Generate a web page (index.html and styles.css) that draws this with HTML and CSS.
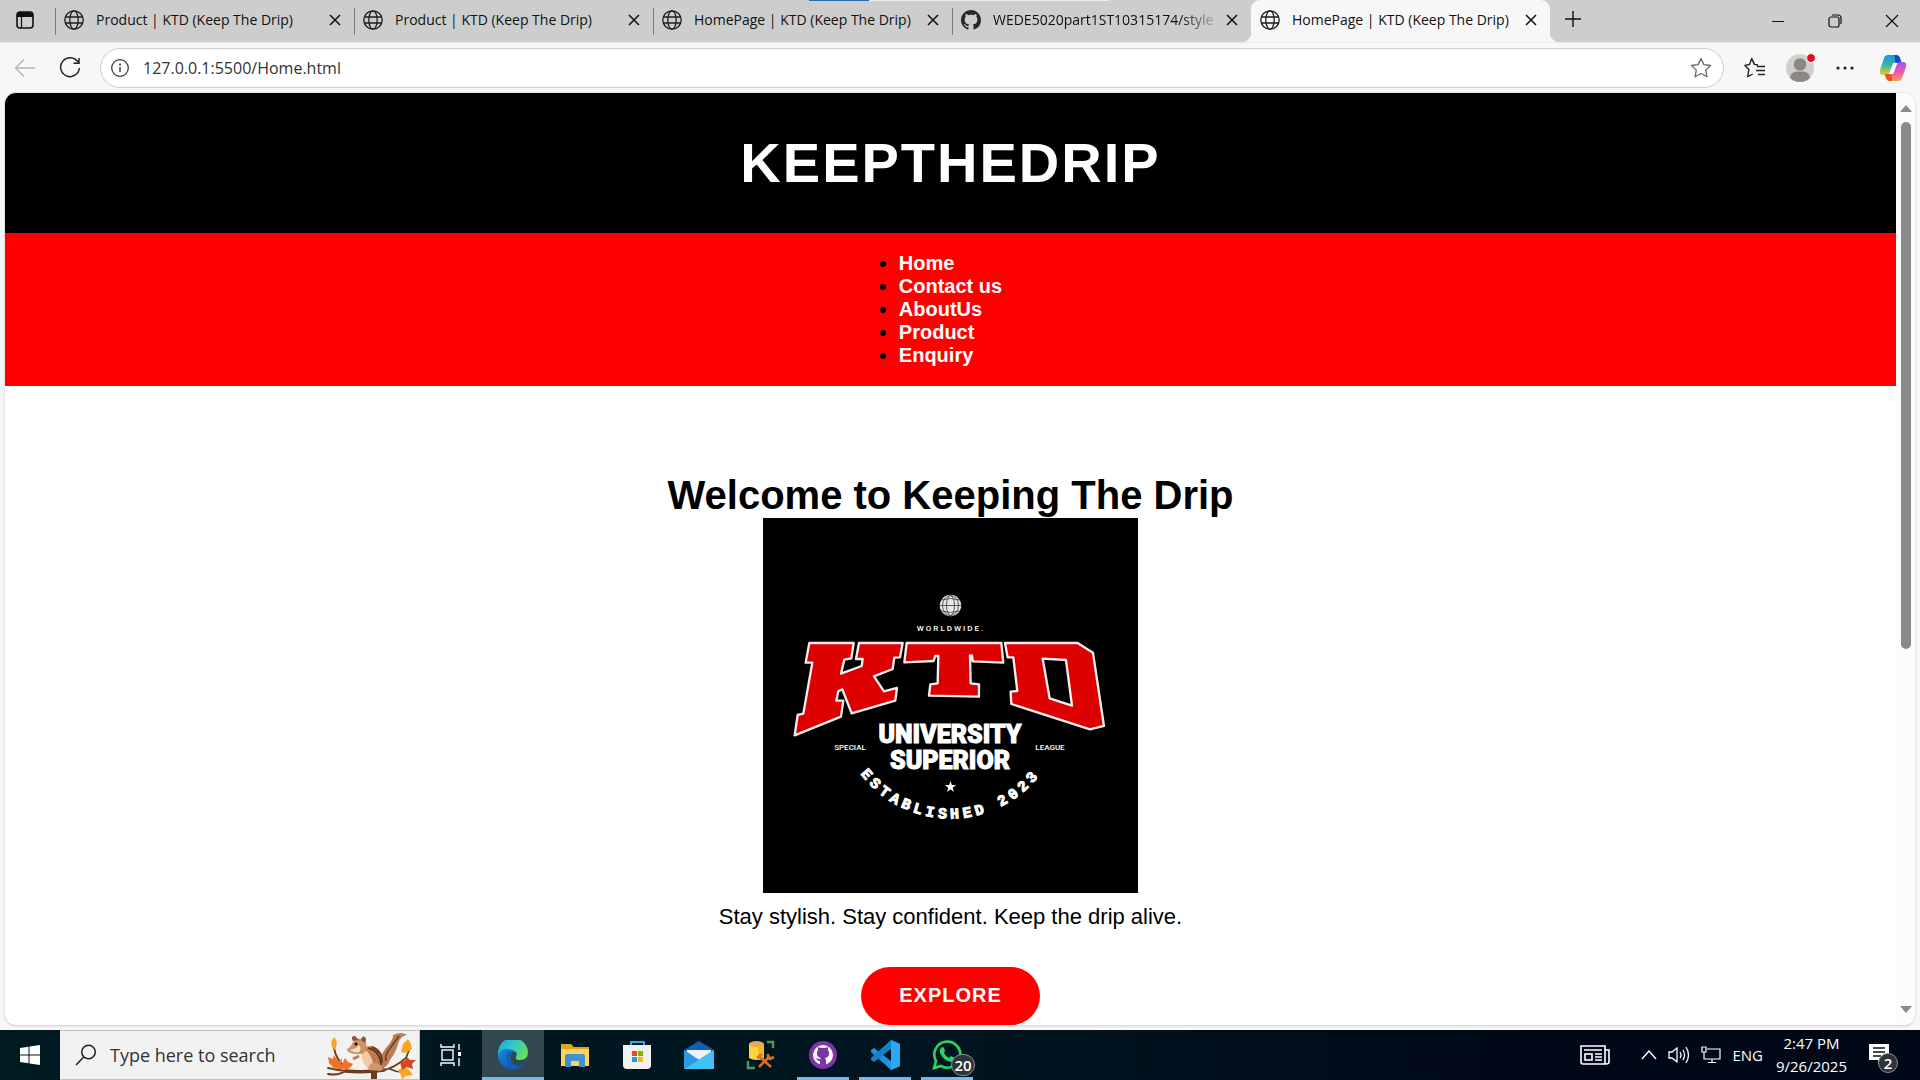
FILE: index.html
```html
<!DOCTYPE html>
<html lang="en">
<head>
<meta charset="utf-8">
<title>HomePage | KTD (Keep The Drip)</title>
<link rel="stylesheet" href="styles.css">
</head>
<body>
<svg class="defs" aria-hidden="true">
  <symbol id="globe" viewBox="0 0 20 20"><g fill="none" stroke="#1c1c1c" stroke-width="1.3"><circle cx="10" cy="10" r="9.2"/><ellipse cx="10" cy="10" rx="4.2" ry="9.2"/><path d="M1.5 7h17M1.5 13h17"/></g></symbol>
  <symbol id="cross" viewBox="0 0 12 12"><path d="M1 1l10 10M11 1L1 11" fill="none" stroke="#111" stroke-width="1.5"/></symbol>
  <symbol id="github" viewBox="0 0 16 16"><path d="M8 0C3.58 0 0 3.58 0 8c0 3.54 2.29 6.53 5.47 7.59.4.07.55-.17.55-.38 0-.19-.01-.82-.01-1.49-2.01.37-2.53-.49-2.69-.94-.09-.23-.48-.94-.82-1.13-.28-.15-.68-.52-.01-.53.63-.01 1.08.58 1.23.82.72 1.21 1.87.87 2.33.66.07-.52.28-.87.51-1.07-1.78-.2-3.64-.89-3.64-3.95 0-.87.31-1.59.82-2.15-.08-.2-.36-1.02.08-2.12 0 0 .67-.21 2.2.82.64-.18 1.32-.27 2-.27s1.36.09 2 .27c1.53-1.04 2.2-.82 2.2-.82.44 1.1.16 1.92.08 2.12.51.56.82 1.27.82 2.15 0 3.07-1.87 3.75-3.65 3.95.29.25.54.73.54 1.48 0 1.07-.01 1.93-.01 2.2 0 .21.15.46.55.38A8.01 8.01 0 0016 8c0-4.42-3.58-8-8-8z"/></symbol>
</svg>

<header class="strip">
  <button class="tab-actions" aria-label="Tab actions"><svg width="18" height="18" viewBox="0 0 18 18"><rect x="1" y="1" width="16" height="16" rx="3" fill="none" stroke="#111" stroke-width="1.6"/><path d="M1 6V4q0-3 3-3h10q3 0 3 3v2z" fill="#111"/><path d="M5.500 6v11" stroke="#111" stroke-width="1.2"/></svg></button>
  <div class="tab"><svg class="tab-icon"><use href="#globe"/></svg><span class="tab-title">Product | KTD (Keep The Drip)</span><button class="tab-close" aria-label="Close tab"><svg width="12" height="12"><use href="#cross"/></svg></button></div>
  <div class="tab"><svg class="tab-icon"><use href="#globe"/></svg><span class="tab-title">Product | KTD (Keep The Drip)</span><button class="tab-close" aria-label="Close tab"><svg width="12" height="12"><use href="#cross"/></svg></button></div>
  <div class="tab"><svg class="tab-icon"><use href="#globe"/></svg><span class="tab-title">HomePage | KTD (Keep The Drip)</span><button class="tab-close" aria-label="Close tab"><svg width="12" height="12"><use href="#cross"/></svg></button></div>
  <div class="tab"><svg class="tab-icon" fill="#24292f"><use href="#github"/></svg><span class="tab-title fade">WEDE5020part1ST10315174/style</span><button class="tab-close" aria-label="Close tab"><svg width="12" height="12"><use href="#cross"/></svg></button></div>
  <div class="tab active"><svg class="tab-icon"><use href="#globe"/></svg><span class="tab-title">HomePage | KTD (Keep The Drip)</span><button class="tab-close" aria-label="Close tab"><svg width="12" height="12"><use href="#cross"/></svg></button></div>
  <button class="new-tab" aria-label="New tab"><svg width="18" height="18" viewBox="0 0 18 18"><path d="M9 1v16M1 9h16" stroke="#111" stroke-width="1.4"/></svg></button>
  <div class="window-controls">
    <button aria-label="Minimize"><svg width="14" height="14" viewBox="0 0 14 14"><path d="M1 7.500h12" stroke="#111"/></svg></button>
    <button aria-label="Restore"><svg width="14" height="14" viewBox="0 0 14 14"><g fill="none" stroke="#111" stroke-width="1.2"><rect x="1" y="3" width="10" height="10" rx="2"/><path d="M4 1h6q3 0 3 3v6"/></g></svg></button>
    <button aria-label="Close"><svg width="14" height="14" viewBox="0 0 14 14"><path d="M1 1l12 12M13 1L1 13" stroke="#111" stroke-width="1.2"/></svg></button>
  </div>
  <div class="load-bar"></div>
</header>

<div class="toolbar">
  <button aria-label="Back"><svg width="22" height="20" viewBox="0 0 22 20"><path d="M21 10H1.500M10 1.500L1.500 10l8.500 8.500" fill="none" stroke="#b5b5b5" stroke-width="1.4"/></svg></button>
  <button aria-label="Refresh"><svg width="22" height="22" viewBox="0 0 22 22"><path d="M19 5.200A9.400 9.400 0 1 0 20.400 11M20 1v5.200h-5.500" fill="none" stroke="#222" stroke-width="1.500"/></svg></button>
  <div class="address">
    <svg width="18" height="18" viewBox="0 0 18 18"><circle cx="9" cy="9" r="8.300" fill="none" stroke="#333" stroke-width="1.200"/><path d="M9 8v5" stroke="#333" stroke-width="1.400"/><circle cx="9" cy="5.500" r="1" fill="#333"/></svg>
    <input type="text" aria-label="Address" value="127.0.0.1:5500/Home.html">
    <button aria-label="Add to favorites"><svg width="22" height="22" viewBox="0 0 22 22"><path d="M11 1.500l2.900 6.100 6.700.9-4.900 4.600 1.200 6.600-5.900-3.200-5.900 3.200 1.200-6.600L1.400 8.500l6.700-.9z" fill="none" stroke="#666" stroke-width="1.300" stroke-linejoin="round"/></svg></button>
  </div>
  <div class="tools">
    <button aria-label="Favorites"><svg width="22" height="22" viewBox="0 0 22 22"><path d="M14 8l-3.500-.6L7.700 1.600 5.500 7.500.9 8.400l4 4-1.200 7.200 5-2.600M13 9.500h8M12 13.500h9M14 17.500h7M7.700 1.600l2.600 5.900" fill="none" stroke="#222" stroke-width="1.400" stroke-linejoin="round"/></svg></button>
    <button aria-label="Profile"><svg width="30" height="30" viewBox="0 0 30 30"><circle cx="14" cy="15" r="14" fill="#d3d0cc"/><circle cx="14" cy="11.500" r="6.200" fill="#8b8783"/><path d="M4 25q1-6.500 7-6.500h6q6 0 7 6.500-4 4-10 4T4 25z" fill="#8b8783"/><circle cx="25" cy="5" r="4.400" fill="#e00b1c" stroke="#f7f7f7"/></svg></button>
    <button aria-label="Settings and more"><svg width="18" height="4" viewBox="0 0 18 4"><g fill="#222"><circle cx="2" cy="2" r="1.600"/><circle cx="9" cy="2" r="1.600"/><circle cx="16" cy="2" r="1.600"/></g></svg></button>
    <button aria-label="Copilot"><svg width="28" height="28" viewBox="0 0 28 28"><defs><linearGradient id="cpa" x1="0" y1="0" x2="0" y2="1"><stop offset="0" stop-color="#1697e6"/><stop offset=".5" stop-color="#38b59c"/><stop offset="1" stop-color="#e9d424"/></linearGradient><linearGradient id="cpb" x1="0" y1="0" x2="0" y2="1"><stop offset="0" stop-color="#a355f0"/><stop offset=".55" stop-color="#ef58a8"/><stop offset="1" stop-color="#ff9a4c"/></linearGradient></defs><path d="M9 1h8q3 0 4 3l1.500 5H17q-3 0-4 3l-2 6q-1 3-4 3H4q-4 0-3-5L5 4q1-3 4-3z" fill="url(#cpa)"/><path d="M15 1h2q3 0 4 3l1.500 5H18q-3-1-2-5z" fill="#1b46c8"/><path d="M19 27h-8q-3 0-4-3l-1-4h5q3 0 4-3l2-6q1-3 4-3h3q4 0 3 5l-4 11q-1 3-4 3z" fill="url(#cpb)"/><path d="M13 27h-2q-3 0-4-3l-1-4h5q3 1 2 7z" fill="#ee5128"/><path d="M14.500 9h4l-4.500 11h-4z" fill="#fff"/></svg></button>
  </div>
</div>

<div class="viewport">
  <main class="page">
    <div class="banner"><h1>KEEPTHEDRIP</h1></div>
    <nav class="menu"><ul>
      <li><a href="#home">Home</a></li>
      <li><a href="#contact">Contact us</a></li>
      <li><a href="#about">AboutUs</a></li>
      <li><a href="#product">Product</a></li>
      <li><a href="#enquiry">Enquiry</a></li>
    </ul></nav>
    <section class="hero">
      <h2>Welcome to Keeping The Drip</h2>
      <svg class="logo" viewBox="0 0 375 375" role="img" aria-label="KTD University Superior">
        <rect width="375" height="375"/>
        <circle cx="187.500" cy="87.500" r="10.700" fill="#e8e8e8"/>
        <g fill="none" stroke="#333" stroke-width=".8"><ellipse cx="187.500" cy="87.500" rx="4" ry="10"/><ellipse cx="187.500" cy="87.500" rx="8" ry="10"/><path d="M177 87.500h21M178 82q9.500-3 19 0M178 93q9.500 3 19 0"/></g>
        <g transform="translate(-3 62) scale(.3333)" fill="#dc0000" stroke-linejoin="round">
          <g id="ktd" stroke="#f4eeee" stroke-width="7">
            <path d="M148 189H281L274 235 253 239 243 281 305 258 308 237H288L297 189H428L420 232 403 233 398 267 342 289 372 334 411 324 406 362 275 400 247 328 235 334 229 362H250L243 410 104 466 113 405 130 401 157 248H137z"/>
            <path d="M440 189H724L730 248 638 244 636 226H630L632 310 657 313V350L507 347 511 313 533 310 535 228H526L521 243 433 247z"/>
            <path fill-rule="evenodd" d="M735 189H953L999 218 1032 438 990 448 754 372 752 335 772 333 760 232H743zM848 236L869 355 936 377 918 240z"/>
          </g>
        </g>
        <g fill="#fff" text-anchor="middle">
          <text class="logo-small spaced" x="188" y="113">WORLDWIDE.</text>
          <text class="logo-small" x="87" y="232">SPECIAL</text>
          <text class="logo-small" x="287" y="232">LEAGUE</text>
          <text class="logo-big" x="187" y="225">UNIVERSITY</text>
          <text class="logo-big" x="187" y="251">SUPERIOR</text>
          <path d="M187.500 263l1.400 4.100h4.300l-3.500 2.600 1.300 4.200-3.500-2.600-3.500 2.600 1.300-4.200-3.500-2.600h4.300z"/>
          <path id="arc" d="M74.500 187.500a113 113 0 0 0 226 0" fill="none"/>
          <text class="logo-arc"><textPath href="#arc" startOffset="50%">ESTABLISHED 2023</textPath></text>
        </g>
      </svg>
      <p>Stay stylish. Stay confident. Keep the drip alive.</p>
      <button class="explore">EXPLORE</button>
    </section>
  </main>
  <div class="scrollbar"><i class="up"></i><i class="thumb"></i><i class="down"></i></div>
</div>

<footer class="taskbar">
  <button class="start" aria-label="Start"><svg width="20" height="20" viewBox="0 0 20 20" fill="#fff"><path d="M0 3l8.500-1.200v7.700H0zM9.500 1.600L20 0v9.500H9.500zM0 10.500h8.500v7.700L0 17zM9.500 10.500H20V20L9.500 18.400z"/></svg></button>
  <label class="search">
    <svg width="22" height="22" viewBox="0 0 22 22"><circle cx="13.500" cy="8" r="6.800" fill="none" stroke="#222" stroke-width="1.500"/><path d="M8.800 13L1 21" stroke="#222" stroke-width="1.600"/></svg>
    <input type="text" placeholder="Type here to search" aria-label="Search">
    <svg width="90" height="48" viewBox="0 0 90 48">
      <g fill="none" stroke="#6b3d1e" stroke-linecap="round"><path d="M2 37q18 4 32 4t24-2 22-12l4-10M2 43q12 2 18-4M8 17q2 12 12 20M64 38q8 4 16 3" stroke-width="1.800"/><path d="M20 40q18 2 38-1" stroke-width="3.500"/><path d="M48 41v7" stroke-width="6"/></g>
      <path d="M57 33Q52 26 60 17q8-9 7-13Q76 0 81 4q-7 1-9 9t-8 16q-2 6-7 8z" fill="#bd7c58"/><path d="M60 30Q58 24 65 16q5-7 8-11" fill="none" stroke="#754127" stroke-width="1.800"/>
      <path d="M36 18q11-7 18 2 8 9 3 19H44q-4-8-9-17z" fill="#c07a4c"/><path d="M36 20q-2 10 5 17l6 1q1-10-6-18z" fill="#f2cba5"/><path d="M42 17q12 3 13 17M46 16q11 5 10 16" fill="none" stroke="#563322" stroke-width="1.600"/><path d="M42 39q1-9 9-7 7 3 4 8z" fill="#d2966f"/>
      <path d="M21 18q4-2 6-7l5-3q5-1 8 4 2 6-2 10-7 3-16-1z" fill="#cd9266"/><path d="M24 19q6-1 9-5 3 4 0 7-5 1-9-2z" fill="#f6dcc0"/><path d="M27 10q-3-5 2-5l4 4M35 9q1-5 4-3 2 2 0 6" fill="#905234"/><circle cx="30" cy="13" r="1.600" fill="#1b1210"/><path d="M33 25l-6 3" stroke="#c07a4c" stroke-width="3"/>
      <g fill="#f5a623"><path d="M8 6q5 5 1 13Q2 14 8 6z"/><path d="M82 8l3 5 1 5-6 4-5-1 2-8z"/><path d="M72 39l7-3 5 4 3 4-7 1-4 3-1-4z"/></g>
      <g fill="#f0702a"><path d="M2 26l5 2 1-4 4 6 4-2-1 5 5 2-3 4-9-2-5-5z"/><path d="M19 27l3 4 5 2-3 4-5 2-3-5z"/></g><path d="M74 31l5-1 2-4 3 3 6 0-4 4 1 5-6-2-5 3z" fill="#d9481c"/>
    </svg>
  </label>
  <div class="apps">
    <button aria-label="Task View"><svg width="22" height="24" viewBox="0 0 22 24"><g fill="none" stroke="#fff" stroke-width="1.400"><rect x="2" y="7" width="11" height="10"/><path d="M1 1v3h13V1M1 23v-3h13v3M19 1v6M19 15v8"/></g><rect x="18" y="9" width="3" height="4" fill="#fff"/></svg></button>
    <button class="current open" aria-label="Edge"><svg width="30" height="30" viewBox="0 0 30 30"><defs><linearGradient id="ea" x1="0" y1="0" x2="1" y2=".5"><stop offset="0" stop-color="#1b9de2"/><stop offset=".5" stop-color="#2fc6d0"/><stop offset="1" stop-color="#5fe063"/></linearGradient><linearGradient id="eb" x1="0" y1="0" x2="1" y2="1"><stop offset="0" stop-color="#1a86dc"/><stop offset="1" stop-color="#0c4a9e"/></linearGradient></defs><path d="M0 14A15 15 0 0 1 30 12q0 8-8 8-5 0-4-3 3-6-6-7Q4 10 0 17z" fill="url(#ea)"/><path d="M0 15q2-6 8-6 6 0 9 3-5 0-5 6 1 8 10 7 4 0 6-2-4 7-13 7A15 15 0 0 1 0 15z" fill="url(#eb)"/><path d="M9 13q-3 8 4 14 4 3 8 1-11-2-10-11l3-5q-3-1-5 1z" fill="#1261b8"/></svg></button>
    <button aria-label="File Explorer"><svg width="28" height="24" viewBox="0 0 28 24"><path d="M0 1h10l3 3h15v18H0z" fill="#e0a21a"/><path d="M0 6h28v17H0z" fill="#fcd45c"/><path d="M4 24V13q0-2 2-2h16q2 0 2 2v11h-6v-6h-8v6z" fill="#3f92d2"/></svg></button>
    <button aria-label="Microsoft Store"><svg width="30" height="30" viewBox="0 0 30 30"><path d="M9 7V2h13v5" fill="none" stroke="#38a9df" stroke-width="2"/><path d="M1 5h28v20q0 4-4 4H5q-4 0-4-4z" fill="#f3f1f0"/><path d="M10 11h5v5h-5z" fill="#ea4f24"/><path d="M16 11h5v5h-5z" fill="#7fb800"/><path d="M10 17h5v5h-5z" fill="#18a0e8"/><path d="M16 17h5v5h-5z" fill="#fbb616"/></svg></button>
    <button aria-label="Mail"><svg width="30" height="28" viewBox="0 0 30 28"><path d="M0 9L15 0l15 9v6H0z" fill="#0f60b4"/><path d="M3 9h24v6L15 22 3 15z" fill="#f2f2f4"/><path d="M0 9l15 10L30 9v19H0z" fill="#24a3e8"/><path d="M0 28L30 9v19z" fill="#3fc3f5"/><path d="M0 9l15 10L0 28z" fill="#2b9ae2"/></svg></button>
    <button aria-label="SQL Server Management Studio"><svg width="30" height="30" viewBox="0 0 30 30"><path d="M21 2h6v6M2 21v7h7" fill="none" stroke="#4a9b56" stroke-width="2.500"/><path d="M3 4v14q7 4 15 0V4z" fill="#fbd53a"/><path d="M12 5v15q4 0 6-2V4z" fill="#f5b91d"/><ellipse cx="10.500" cy="4" rx="7.500" ry="3" fill="#e9a95a"/><path d="M13 27l11-11M25 27L14 17M11 18l5-4M22 14v4l2 1 4-2" fill="none" stroke="#d8731c" stroke-width="2.600"/></svg></button>
    <button class="open" aria-label="GitHub Desktop"><svg width="28" height="28" viewBox="0 0 28 28"><circle cx="14" cy="14" r="14" fill="#7c35a4"/><circle cx="14" cy="14" r="10" fill="#fff"/><path d="M11 24v-4q-3 0-4-3 2 1 4 1l1-1q-5-1-4-6l1-2v-3l3 1h4l3-1v3l1 2q1 5-4 6l1 2v5" fill="#7c35a4"/></svg></button>
    <button class="open" aria-label="Visual Studio Code"><svg width="30" height="30" viewBox="0 0 30 30"><path d="M21 0l9 4v22l-9 4L1 12l0-2 3-2 17 13z" fill="#1d92de"/><path d="M21 0v9L4 22l-3-2v-2z" fill="#1580cc"/><path d="M21 0l9 4v22l-9 4z" fill="#2ba8f2"/></svg></button>
    <button class="open" aria-label="WhatsApp"><svg width="30" height="30" viewBox="0 0 30 30"><path d="M2 28l2-7a13 13 0 1 1 5 5z" fill="none" stroke="#2bd366" stroke-width="2.600"/><path d="M9 8q2-2 3 0l1 3-1 2q2 4 5 5l2-2 4 2q0 4-4 4Q12 21 8 13q-1-3 1-5z" fill="#2bd366"/></svg><span class="badge">20</span></button>
  </div>
  <div class="tray">
    <button class="news" aria-label="News"><svg width="30" height="20" viewBox="0 0 30 20"><g fill="none" stroke="#fff" stroke-width="1.600"><path d="M1 1h24v18H3q-2 0-2-2zM25 5h4v12q0 2-3 2h-3"/><path d="M4 5h18M15 9h7M15 12h7M15 15h7" /><rect x="5" y="9" width="7" height="6"/></g></svg></button>
    <button aria-label="Show hidden icons"><svg width="16" height="10" viewBox="0 0 16 10"><path d="M1 9l7-8 7 8" fill="none" stroke="#fff" stroke-width="1.400"/></svg></button>
    <button aria-label="Volume"><svg width="22" height="18" viewBox="0 0 22 18"><path d="M1 6h3l5-4v14l-5-4H1zM12 6q2 3 0 6M15 4q3 5 0 10M18 1q5 8 0 16" fill="none" stroke="#fff" stroke-width="1.300"/></svg></button>
    <button aria-label="Network"><svg width="20" height="18" viewBox="0 0 20 18"><path d="M6 3h13v10H3V8M11 13v4M7 16.500h8M1 1h4v5H1zM3 6v3" fill="none" stroke="#fff" stroke-width="1.200"/></svg></button>
    <span class="lang">ENG</span>
    <div class="clock"><span>2:47 PM</span><span>9/26/2025</span></div>
    <button class="notes" aria-label="Notifications"><svg width="20" height="20" viewBox="0 0 20 20"><path d="M0 0h20v16h-7l-4 4v-4H0z" fill="#fff"/><path d="M4 4h12M4 8h12M4 12h8" stroke="#081020" stroke-width="1.300"/></svg><span class="badge">2</span></button>
  </div>
</footer>
</body>
</html>
```
FILE: styles.css
```css
* { box-sizing: border-box; }
body { margin: 0; height: 100vh; display: flex; flex-direction: column; overflow: hidden; background: #f7f7f7; font-family: "Open Sans", "Noto Sans", sans-serif; color: #111; }
button { border: 0; padding: 0; background: none; font: inherit; color: inherit; display: flex; align-items: center; justify-content: center; }
input { border: 0; padding: 0; background: none; font: inherit; color: inherit; outline: 0; min-width: 0; flex: 1; }
svg { display: block; flex: none; }
.defs { position: absolute; width: 0; height: 0; }

/* tab strip */
.strip { position: relative; display: flex; height: 42px; flex: none; background: #cdcdcd; }
.tab-actions { width: 55px; padding-right: 5px; padding-bottom: 2px; }
.tab { position: relative; flex: 0 1 299px; min-width: 0; display: flex; align-items: center; padding: 0 13px 2px 8px; border-left: 1px solid transparent; border-image: linear-gradient(#cdcdcd 9px, #7c7c7c 9px, #7c7c7c 34px, #cdcdcd 34px) 1; }
.tab-icon { width: 20px; height: 20px; margin-right: 12px; }
.tab-title { flex: 1; min-width: 0; overflow: hidden; white-space: nowrap; font-size: 14px; line-height: 20px; }
.tab-title.fade { -webkit-mask-image: linear-gradient(90deg, #000 82%, transparent); mask-image: linear-gradient(90deg, #000 82%, transparent); }
.tab-close { width: 12px; height: 20px; margin-left: 4px; }
.tab.active { background: #f7f7f7; border-image: none; border-radius: 9px 9px 0 0; }
.tab.active::before, .tab.active::after { content: ""; position: absolute; bottom: 0; width: 9px; height: 9px; }
.tab.active::before { left: -10px; background: radial-gradient(circle at 0 0, #cdcdcd 9px, #f7f7f7 9px); }
.tab.active::after { right: -9px; background: radial-gradient(circle at 100% 0, #cdcdcd 9px, #f7f7f7 9px); }
.new-tab { width: 46px; padding-bottom: 4px; }
.window-controls { margin-left: auto; display: flex; }
.window-controls button { width: 57px; }
.load-bar { position: absolute; top: 0; left: 809px; width: 300px; height: 1px; background: linear-gradient(90deg, #2b6cac 20%, #ececec 20%); }

/* address row */
.toolbar { display: flex; align-items: center; height: 51px; flex: none; padding: 0 13px 0 14px; border-top: 1px solid #ebebeb; }
.toolbar > button { width: 22px; margin-right: 23px; }
.toolbar > button + button { margin-right: 19px; }
.address { flex: 1; display: flex; align-items: center; gap: 14px; height: 40px; padding: 0 11px 0 10px; border: 1px solid #cbcbcb; border-radius: 20px; background: #fff; font-size: 16px; color: #333; }
.tools { display: flex; align-items: center; gap: 20px; margin-left: 20px; }
.tools button:last-child { margin-left: 5px; }

/* web page */
.viewport { flex: 1; min-height: 0; display: flex; margin: 0 5px 4px; overflow: hidden; border-radius: 11px; background: #fff; border-bottom: 1px solid #dcdcdc; box-shadow: 0 0 2px #bbb; }
.page { flex: 1; overflow: hidden; text-align: center; font-family: "Liberation Sans", Arial, sans-serif; font-size: 20px; line-height: 23px; color: #000; }
.banner { background: #000; color: #fff; padding: 38px 20px; }
.banner h1 { margin: 0; font-size: 56px; line-height: 64px; letter-spacing: 2px; }
.menu { background: #f00; display: flex; justify-content: center; padding: 19px 0; }
.menu ul { margin: 0; padding: 0; text-align: left; }
.menu a { color: #fff; font-weight: bold; text-decoration: none; }
.hero { display: flex; flex-direction: column; align-items: center; padding: 86px 25px; }
.hero h2 { margin: 0; font-size: 40px; line-height: 46px; }
.hero p { margin: 11px 0 37px; font-size: 22px; line-height: 26px; }
.logo { width: 375px; height: 375px; }
.logo-small { font: 500 8px Roboto, sans-serif; }
.spaced { letter-spacing: 2px; }
.logo-big { font: 900 25px Roboto, sans-serif; stroke: #fff; stroke-width: 1px; }
.logo-arc { font: bold 15px "Liberation Mono", monospace; letter-spacing: 4px; stroke: #fff; stroke-width: 1px; }
.explore { padding: 16px 38px 18px; border-radius: 30px; background: #f00; color: #fff; font-size: 20px; line-height: 24px; font-weight: bold; letter-spacing: 1px; }
.scrollbar { width: 19px; display: flex; flex-direction: column; align-items: center; padding: 12px 0; background: #fcfcfc; }
.up, .down { border: 6px solid transparent; }
.up { border-top: 0; border-bottom: 7px solid #8a8a8a; }
.down { border-bottom: 0; border-top: 7px solid #8a8a8a; margin-top: auto; }
.thumb { width: 10px; height: 58%; margin-top: 10px; border-radius: 5px; background: #8a8a8a; }

/* taskbar */
.taskbar { display: flex; height: 50px; flex: none; background: linear-gradient(90deg, #001a22, #00151f 50%, #000818 80%); color: #fff; }
.start { width: 60px; }
.search { flex: 0 1 360px; min-width: 0; display: flex; align-items: center; padding: 0 3px 0 15px; gap: 13px; background: #f2f2f2; border: 1px solid #c0c0c0; border-left: 0; color: #333; font-size: 18px; }
.search input::placeholder { color: #333; opacity: 1; }
.apps { display: flex; }
.apps button { position: relative; width: 62px; }
.apps button.current { background: #33474f; }
.apps .open::after { content: ""; position: absolute; left: 5px; right: 5px; bottom: 0; height: 3px; background: #76b9ed; }
.apps .current::after { left: 0; right: 0; }
.badge { position: absolute; display: flex; align-items: center; justify-content: center; background: #2e3338; border: 1px solid #8a8f94; border-radius: 12px; color: #fff; font-weight: 600; font-size: 15px; line-height: 18px; }
.apps .badge { right: 3px; bottom: 4px; width: 24px; height: 22px; }
.tray { margin-left: auto; display: flex; align-items: center; gap: 11px; padding-right: 31px; }
.news { margin-right: 20px; }
.lang { font-size: 15px; }
.clock { display: flex; flex-direction: column; align-items: center; margin-left: 2px; font-size: 15px; line-height: 23px; }
.notes { position: relative; margin: 0 0 2px 11px; }
.notes .badge { left: 9px; top: 9px; width: 20px; height: 20px; }
```
